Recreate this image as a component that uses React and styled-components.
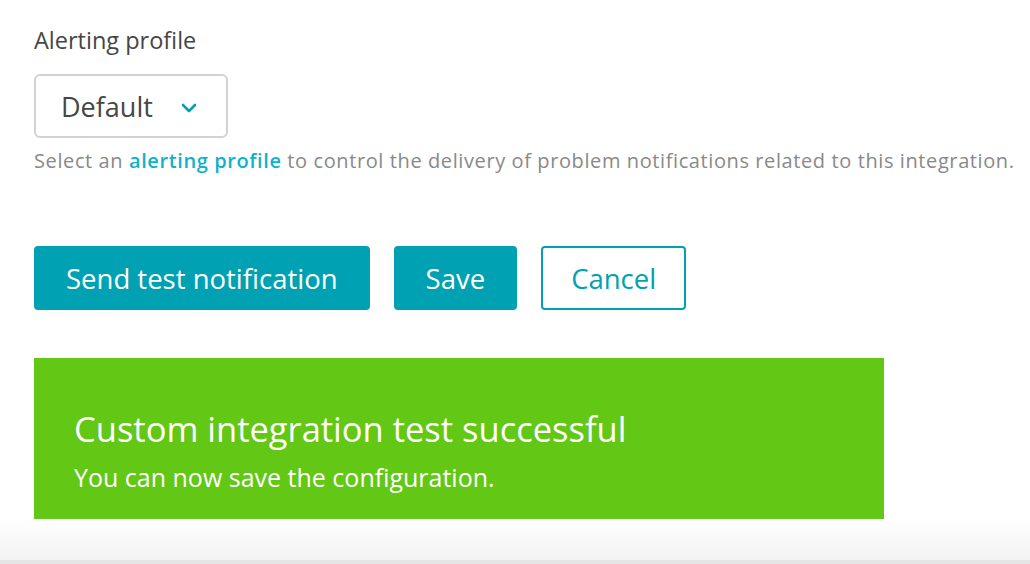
import styled, { createGlobalStyle } from "styled-components";

const GlobalStyle = createGlobalStyle`
  html, body {
    margin: 0;
    padding: 0;
    background: #ffffff;
  }
  body {
    font-family: "Open Sans", "Noto Sans", sans-serif;
    color: #454646;
  }
`;

const Page = styled.div`
  width: 1030px;
  height: 564px;
  display: flex;
  flex-direction: column;
  overflow: hidden;
`;

const Content = styled.div`
  padding: 25px 0 0 34px;
  display: flex;
  flex-direction: column;
  align-items: flex-start;
`;

const Label = styled.label`
  font-size: 23.5px;
  line-height: 30px;
  color: #454646;
`;

const Select = styled.button`
  margin-top: 19px;
  width: 194px;
  height: 64px;
  box-sizing: border-box;
  border: 2px solid #d2d2d2;
  border-radius: 6px;
  background: #fff;
  display: flex;
  align-items: center;
  padding: 0 0 0 25px;
  gap: 28px;
  font-family: inherit;
  font-size: 27px;
  color: #454646;
  cursor: pointer;

  svg {
    margin-top: 4px;
  }
`;

const Hint = styled.p`
  margin: 10px 0 0;
  font-size: 20px;
  line-height: 26px;
  color: #898989;
  letter-spacing: 0.6px;
`;

const Link = styled.a`
  color: #0fb2c9;
  font-weight: 600;
  text-decoration: none;
`;

const Actions = styled.div`
  margin-top: 72px;
  display: flex;
  gap: 24px;
`;

const Button = styled.button`
  height: 64px;
  box-sizing: border-box;
  padding: 0 ${({ $outline }) => ($outline ? 28 : 30)}px;
  border-radius: 4px;
  border: 2px solid #00a1b2;
  background: ${({ $outline }) => ($outline ? "#fff" : "#00a1b2")};
  color: ${({ $outline }) => ($outline ? "#00a1b2" : "#fff")};
  font-family: inherit;
  font-size: 27.5px;
  cursor: pointer;
`;

const Banner = styled.div`
  margin-top: 48px;
  width: 850px;
  height: 161px;
  box-sizing: border-box;
  background: #62c715;
  color: #fff;
  padding: 49px 0 0 40px;
`;

const BannerTitle = styled.h2`
  margin: 0;
  font-size: 34.5px;
  font-weight: 400;
  line-height: 44px;
`;

const BannerText = styled.p`
  margin: 11px 0 0;
  font-size: 25px;
  line-height: 30px;
`;

const Footer = styled.div`
  flex: 1;
  background: linear-gradient(#ffffff, #f2f2f2);
  border-bottom: 4px solid #e5e5e5;
`;

const Chevron = () => (
  <svg width="16" height="10" viewBox="0 0 16 10" fill="none">
    <path d="M2 2l6 6 6-6" stroke="#00a1b2" strokeWidth="2.6" strokeLinecap="round" strokeLinejoin="round" />
  </svg>
);

export default function App() {
  return (
    <Page>
      <GlobalStyle />
      <Content>
        <Label>Alerting profile</Label>
        <Select>
          Default
          <Chevron />
        </Select>
        <Hint>
          Select an <Link href="#">alerting profile</Link> to control the delivery of problem
          notifications related to this integration.
        </Hint>
        <Actions>
          <Button>Send test notification</Button>
          <Button>Save</Button>
          <Button $outline>Cancel</Button>
        </Actions>
        <Banner>
          <BannerTitle>Custom integration test successful</BannerTitle>
          <BannerText>You can now save the configuration.</BannerText>
        </Banner>
      </Content>
      <Footer />
    </Page>
  );
}
